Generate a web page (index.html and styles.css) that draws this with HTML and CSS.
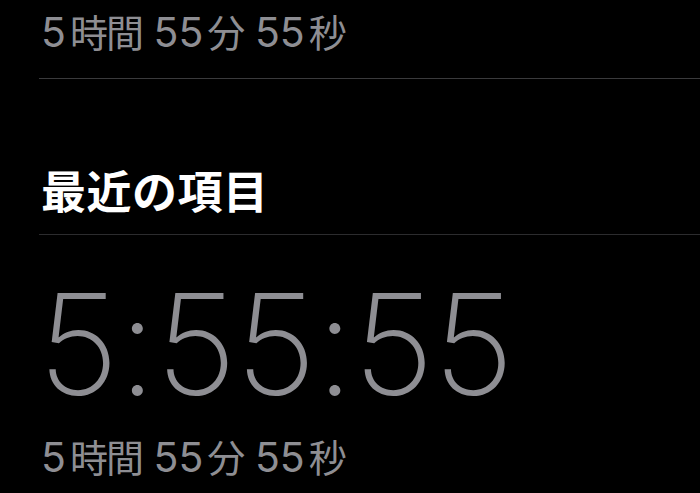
FILE: index.html
```html
<!DOCTYPE html>
<html lang="ja">
<head>
<meta charset="utf-8">
<title>最近の項目</title>
<link rel="stylesheet" href="styles.css">
</head>
<body>
<div class="screen">
  <div class="detail first"><span class="n">5</span><span class="k">時間</span> <span class="n">55</span><span class="k">分</span> <span class="n">55</span><span class="k">秒</span></div>
  <div class="sep"></div>
  <h2 class="title">最近の項目</h2>
  <div class="sep dark"></div>
  <div class="time">5:55:55</div>
  <div class="detail"><span class="n">5</span><span class="k">時間</span> <span class="n">55</span><span class="k">分</span> <span class="n">55</span><span class="k">秒</span></div>
</div>
</body>
</html>
```
FILE: styles.css
```css
html, body {
  margin: 0;
  padding: 0;
  background: #000;
}
.screen {
  width: 700px;
  height: 493px;
  overflow: hidden;
  padding-left: 41px;
  box-sizing: border-box;
  display: flex;
  flex-direction: column;
}
.detail {
  font-family: Inter, "Noto Sans CJK JP", sans-serif;
  font-size: 41px;
  line-height: 50px;
  color: #8e8e93;
  white-space: nowrap;
  margin-top: 14px;
}
.detail.first {
  margin-top: 6px;
}
.detail .k {
  font-family: "Noto Sans CJK JP", sans-serif;
  font-size: 38px;
  letter-spacing: -2px;
  margin-left: 4px;
}
.sep {
  height: 1px;
  background: #3a3a3c;
  margin-left: -2px;
  margin-top: 21px;
  flex: none;
}
.sep.dark {
  background: #2c2c2e;
  margin-top: 21px;
}
.title {
  margin: 88px 0 0 0;
  font-family: "Noto Sans CJK JP", sans-serif;
  font-weight: 700;
  font-size: 45px;
  line-height: 46px;
  letter-spacing: 0.5px;
  color: #fff;
}
.time {
  margin: 37px 0 0 -3px;
  font-family: Inter, sans-serif;
  font-weight: 200;
  font-size: 140px;
  line-height: 145px;
  letter-spacing: -1px;
  color: #8e8e93;
  white-space: nowrap;
}
```
